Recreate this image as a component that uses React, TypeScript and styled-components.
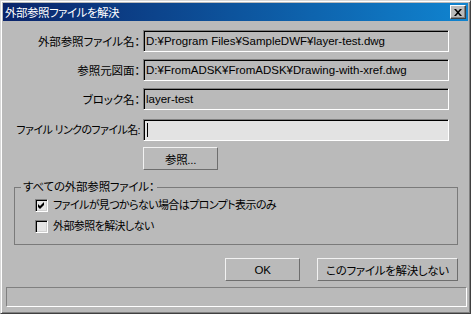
import styled, { createGlobalStyle } from "styled-components";

const GlobalStyle = createGlobalStyle`
  html, body {
    margin: 0;
    padding: 0;
    background: #bababa;
  }
  body {
    font-family: "Liberation Sans", "Noto Sans CJK JP", sans-serif;
    color: #000;
  }
`;

const Window = styled.div`
  box-sizing: border-box;
  width: 471px;
  height: 314px;
  display: flex;
  flex-direction: column;
  padding: 2px;
  background: #bababa;
  border: 1px solid;
  border-color: #d8d8d8 #404040 #404040 #d8d8d8;
  box-shadow: inset 1px 1px 0 #fff, inset -1px -1px 0 #808080;
`;

const TitleBar = styled.div`
  height: 18px;
  display: flex;
  align-items: center;
  justify-content: space-between;
  padding: 0 2px 0 2px;
  background: linear-gradient(to right, #0a246a, #1084d0);
  color: #fff;
  font-size: 11.5px;
  letter-spacing: -0.5px;
  font-feature-settings: "palt";
  white-space: nowrap;
`;

const CloseButton = styled.div`
  box-sizing: border-box;
  width: 16px;
  height: 14px;
  display: flex;
  align-items: center;
  justify-content: center;
  background: #bababa;
  border: 1px solid;
  border-color: #fff #404040 #404040 #fff;
  box-shadow: inset -1px -1px 0 #808080;
`;

const Body = styled.div`
  flex: 1;
  display: flex;
  flex-direction: column;
  padding-top: 9px;
`;

const FormGrid = styled.div`
  display: grid;
  grid-template-columns: 137px 306px;
  grid-template-rows: repeat(3, 22px) 24px;
  column-gap: 3px;
  row-gap: 7px;
  align-items: end;
`;

const Label = styled.div<{ $tight?: boolean }>`
  justify-self: end;
  align-self: center;
  font-size: ${(p) => (p.$tight ? "11px" : "11.5px")};
  letter-spacing: ${(p) => (p.$tight ? "-0.6px" : "-0.1px")};
  font-feature-settings: "palt";
  white-space: nowrap;
`;

const Field = styled.div<{ $editable?: boolean }>`
  box-sizing: border-box;
  height: 22px;
  display: flex;
  align-items: center;
  padding-left: 2px;
  background: ${(p) => (p.$editable ? "#e3e3e3" : "#bababa")};
  border: 1px solid;
  border-color: #808080 #fff #fff #808080;
  box-shadow: inset 1px 1px 0 #000;
  font-size: 11.5px;
  white-space: nowrap;
  overflow: hidden;
`;

const Caret = styled.span`
  width: 1px;
  height: 14px;
  margin-left: 1px;
  background: #000;
`;

const Button = styled.div<{ $width: number }>`
  box-sizing: border-box;
  width: ${(p) => p.$width}px;
  height: 23px;
  display: flex;
  align-items: center;
  justify-content: center;
  background: #bababa;
  border: 1px solid;
  border-color: #f2f2f2 #6e6e6e #6e6e6e #f2f2f2;
  font-size: 11.5px;
  letter-spacing: -0.3px;
  font-feature-settings: "palt";
  white-space: nowrap;
`;

const BrowseRow = styled.div`
  margin: 6px 0 0 140px;
`;

const GroupBox = styled.fieldset`
  margin: 10px 10px 0 11px;
  padding: 0;
  border: 1px solid #7a7a7a;
  min-width: 0;
`;

const Legend = styled.legend`
  margin-left: 6px;
  padding: 0 2px;
  font-size: 11.5px;
  line-height: 14px;
  letter-spacing: -0.2px;
  font-feature-settings: "palt";
`;

const GroupRows = styled.div`
  display: flex;
  flex-direction: column;
  gap: 8px;
  padding: 5px 0 11px 20px;
`;

const CheckRow = styled.div`
  height: 13px;
  display: flex;
  align-items: center;
  gap: 5px;
  font-size: 11px;
  line-height: 13px;
  letter-spacing: -0.6px;
  font-feature-settings: "palt";
  white-space: nowrap;
`;

const CheckBox = styled.div`
  box-sizing: border-box;
  width: 13px;
  height: 13px;
  flex-shrink: 0;
  display: flex;
  align-items: center;
  justify-content: center;
  background: #e6e6e6;
  border: 1px solid;
  border-color: #808080 #fff #fff #808080;
  box-shadow: inset 1px 1px 0 #000, inset -1px -1px 0 #d0d0d0;
`;

const ButtonRow = styled.div`
  display: flex;
  justify-content: flex-end;
  gap: 17px;
  margin-top: 13px;
  padding-right: 10px;
`;

const StatusBar = styled.div`
  box-sizing: border-box;
  height: 20px;
  margin: auto 1px 4px 3px;
  border: 1px solid;
  border-color: #808080 #fff #fff #808080;
`;

function Check({ checked }: { checked?: boolean }) {
  return (
    <CheckBox>
      {checked && (
        <svg width="7" height="7" viewBox="0 0 7 7">
          <path d="M0 2 L2 4 L6 0 L6 3 L2 7 L0 5 Z" fill="#000" />
        </svg>
      )}
    </CheckBox>
  );
}

const rows = [
  { label: "外部参照ファイル名：", value: "D:¥Program Files¥SampleDWF¥layer-test.dwg" },
  { label: "参照元図面：", value: "D:¥FromADSK¥FromADSK¥Drawing-with-xref.dwg" },
  { label: "ブロック名：", value: "layer-test" },
];

export default function App() {
  return (
    <>
      <GlobalStyle />
      <Window>
        <TitleBar>
          <span>外部参照ファイルを解決</span>
          <CloseButton>
            <svg width="8" height="7" viewBox="0 0 8 7">
              <path d="M0 0 L2 0 L4 2.2 L6 0 L8 0 L5 3.5 L8 7 L6 7 L4 4.8 L2 7 L0 7 L3 3.5 Z" fill="#000" />
            </svg>
          </CloseButton>
        </TitleBar>
        <Body>
          <FormGrid>
            {rows.map((r) => [
              <Label key={r.label}>{r.label}</Label>,
              <Field key={r.value}>{r.value}</Field>,
            ])}
            <Label $tight>ファイル リンクのファイル名:</Label>
            <Field $editable>
              <Caret />
            </Field>
          </FormGrid>
          <BrowseRow>
            <Button $width={75}>参照...</Button>
          </BrowseRow>
          <GroupBox>
            <Legend>すべての外部参照ファイル：</Legend>
            <GroupRows>
              <CheckRow>
                <Check checked />
                ファイルが見つからない場合はプロンプト表示のみ
              </CheckRow>
              <CheckRow>
                <Check />
                外部参照を解決しない
              </CheckRow>
            </GroupRows>
          </GroupBox>
          <ButtonRow>
            <Button $width={75}>OK</Button>
            <Button $width={141}>このファイルを解決しない</Button>
          </ButtonRow>
          <StatusBar />
        </Body>
      </Window>
    </>
  );
}
